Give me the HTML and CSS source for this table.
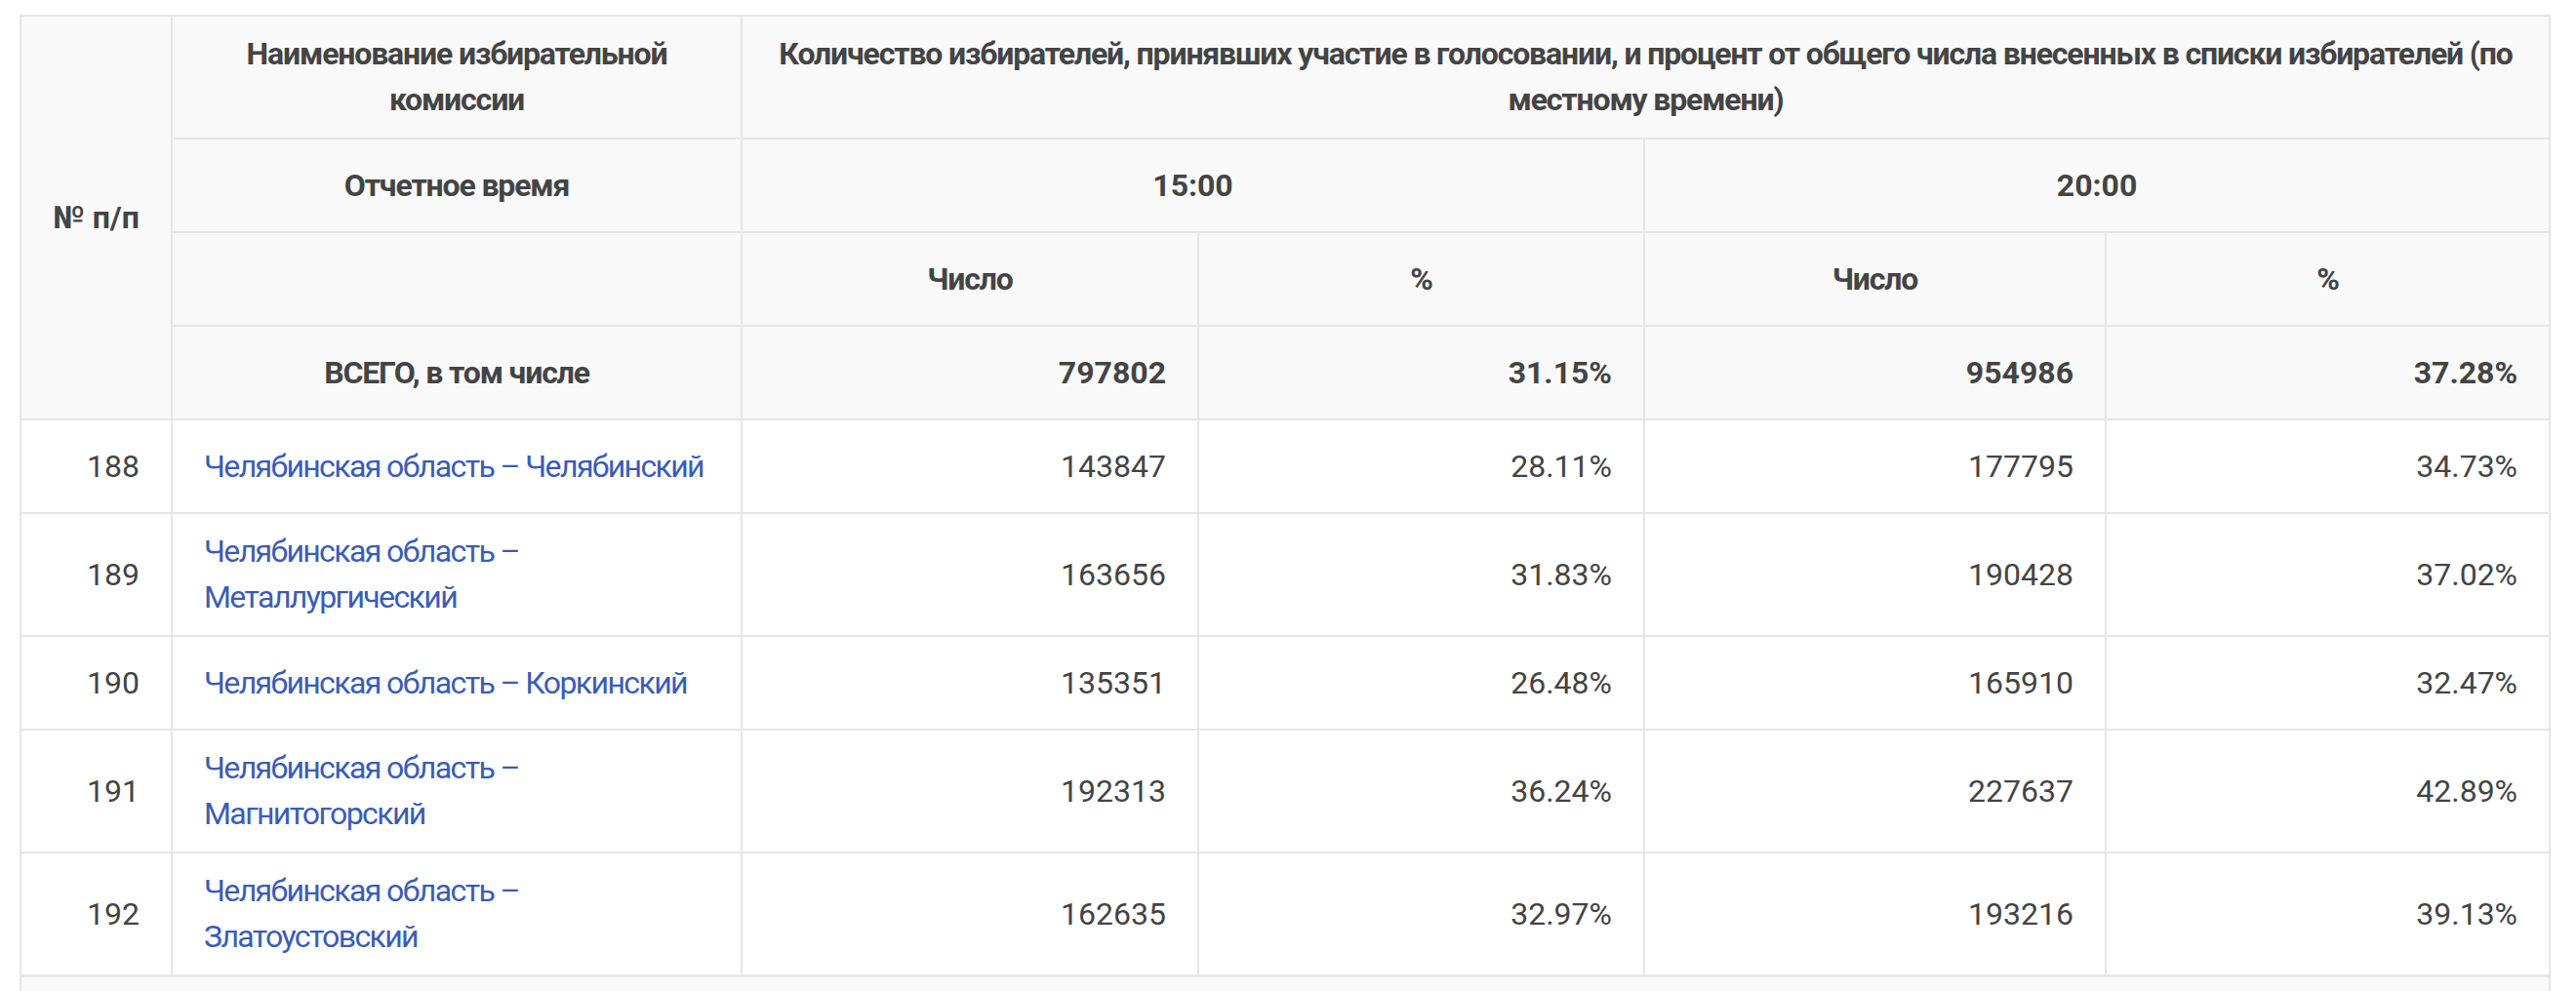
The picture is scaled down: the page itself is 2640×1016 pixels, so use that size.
FILE: index.html
```html
<!DOCTYPE html>
<html lang="ru">
<head>
<meta charset="utf-8">
<title>Явка избирателей</title>
<link rel="stylesheet" href="styles.css">
</head>
<body>
<table class="turnout">
  <colgroup>
    <col class="c-num">
    <col class="c-name">
    <col class="c-a">
    <col class="c-b">
    <col class="c-c">
    <col class="c-d">
  </colgroup>
  <thead>
    <tr>
      <th rowspan="4" class="idx">№ п/п</th>
      <th>Наименование избирательной комиссии</th>
      <th colspan="4">Количество избирателей, принявших участие в голосовании, и процент от общего числа внесенных в списки избирателей (по местному времени)</th>
    </tr>
    <tr>
      <th>Отчетное время</th>
      <th colspan="2" class="time">15:00</th>
      <th colspan="2" class="time">20:00</th>
    </tr>
    <tr>
      <th></th>
      <th>Число</th>
      <th>%</th>
      <th>Число</th>
      <th>%</th>
    </tr>
    <tr>
      <th>ВСЕГО, в том числе</th>
      <th class="num">797802</th>
      <th class="num">31.15%</th>
      <th class="num">954986</th>
      <th class="num">37.28%</th>
    </tr>
  </thead>
  <tbody>
    <tr>
      <td class="num">188</td>
      <td><a href="#">Челябинская область – Челябинский</a></td>
      <td class="num">143847</td>
      <td class="num">28.11%</td>
      <td class="num">177795</td>
      <td class="num">34.73%</td>
    </tr>
    <tr>
      <td class="num">189</td>
      <td><a href="#">Челябинская область – Металлургический</a></td>
      <td class="num">163656</td>
      <td class="num">31.83%</td>
      <td class="num">190428</td>
      <td class="num">37.02%</td>
    </tr>
    <tr>
      <td class="num">190</td>
      <td><a href="#">Челябинская область – Коркинский</a></td>
      <td class="num">135351</td>
      <td class="num">26.48%</td>
      <td class="num">165910</td>
      <td class="num">32.47%</td>
    </tr>
    <tr>
      <td class="num">191</td>
      <td><a href="#">Челябинская область – Магнитогорский</a></td>
      <td class="num">192313</td>
      <td class="num">36.24%</td>
      <td class="num">227637</td>
      <td class="num">42.89%</td>
    </tr>
    <tr>
      <td class="num">192</td>
      <td><a href="#">Челябинская область – Златоустовский</a></td>
      <td class="num">162635</td>
      <td class="num">32.97%</td>
      <td class="num">193216</td>
      <td class="num">39.13%</td>
    </tr>
  </tbody>
  <tfoot>
    <tr>
      <td colspan="6"></td>
    </tr>
  </tfoot>
</table>
</body>
</html>
```

FILE: styles.css
```css
html, body {
  background: #ffffff;
}

body {
  margin: 15px 0 0 20px;
  font-family: Roboto, "Liberation Sans", Arial, sans-serif;
  font-size: 32px;
  line-height: 47px;
  color: #444444;
}

.turnout {
  width: 2592px;
  table-layout: fixed;
  border-collapse: collapse;
}

.c-num { width: 155px; }
.c-name { width: 584px; }
.c-a { width: 468px; }
.c-b { width: 457px; }
.c-c { width: 473px; }
.c-d { width: 455px; }

.turnout th,
.turnout td {
  border: 2px solid #e6e6e6;
  padding: 15px 32px;
  height: 64px;
  vertical-align: middle;
}

.turnout th {
  background: #f9f9f9;
  font-weight: 700;
  text-align: center;
  letter-spacing: -1.15px;
}

.turnout td {
  background: #ffffff;
  font-weight: 400;
  text-align: left;
}

.turnout .num,
.turnout .idx,
.turnout .time {
  letter-spacing: 0;
}

.turnout .num {
  text-align: right;
}

.turnout a {
  color: #3a5cb8;
  text-decoration: none;
  letter-spacing: -1.6px;
}

.turnout tfoot td {
  background: #f9f9f9;
  border-top: 3px solid #e6e6e6;
  border-bottom: 0;
  padding: 0;
  height: 14px;
}
```
